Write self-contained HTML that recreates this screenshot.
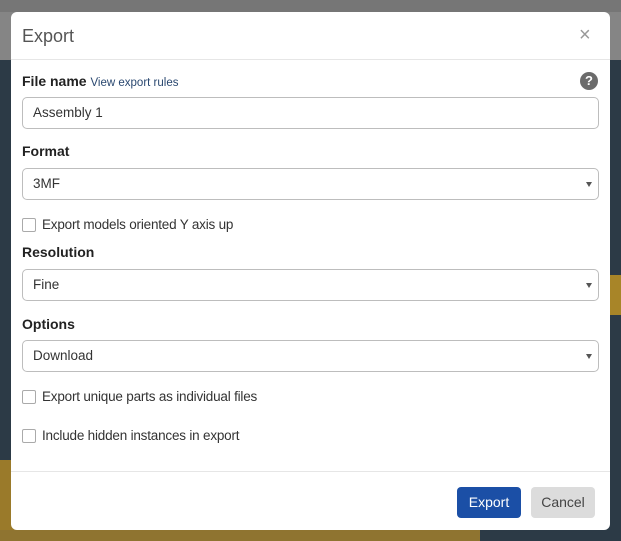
<!DOCTYPE html>
<html><head><style>
body{margin:0;width:621px;height:541px;position:relative;overflow:hidden;font-family:"Liberation Sans",sans-serif;background:#2c3a46}
.a{position:absolute}
.lbl{position:absolute;left:22px;font-weight:bold;font-size:14px;color:#222}
.inp{position:absolute;left:22px;width:577px;height:32px;border:1px solid #bdbdbd;border-radius:5px;box-sizing:border-box;font-size:13.5px;color:#333;padding-left:10px;line-height:30px}
.arr{position:absolute;right:6px;top:13px;width:0;height:0;border-left:3.5px solid transparent;border-right:3.5px solid transparent;border-top:5px solid #555}
.cb{position:absolute;left:22px;width:12px;height:12px;border:1px solid #aaa;border-radius:2px}
.ct{position:absolute;left:42px;font-size:13.5px;color:#333;letter-spacing:-0.2px}
</style></head><body>
<div class="a" style="left:0;top:0;width:621px;height:60px;background:#858585"></div>
<div class="a" style="left:0;top:0;width:621px;height:12px;background:#767676"></div>
<div class="a" style="left:0;top:460px;width:30px;height:81px;background:#9a7a2a"></div>
<div class="a" style="left:0;top:530px;width:480px;height:11px;background:#8f7430"></div>
<div class="a" style="left:610px;top:275px;width:11px;height:40px;background:#a88528"></div>
<div class="a" style="left:11px;top:12px;width:599px;height:518px;background:#fff;border-radius:6px"></div>
<div class="a" style="left:22px;top:26px;font-size:18px;color:#555">Export</div>
<div class="a" style="left:579px;top:24px;font-size:20px;color:#999;font-weight:300">×</div>
<div class="a" style="left:11px;top:59px;width:599px;height:1px;background:#e6e6e6"></div>
<div class="lbl" style="top:73px">File name <span style="font-weight:normal;font-size:11.5px;color:#2a4870">View export rules</span></div>
<div class="a" style="left:580px;top:72px;width:18px;height:18px;border-radius:50%;background:#6b6b6b;color:#fff;font-weight:bold;font-size:13px;text-align:center;line-height:18px">?</div>
<div class="inp" style="top:97px">Assembly 1</div>
<div class="lbl" style="top:143px">Format</div>
<div class="inp" style="top:168px">3MF<div class="arr"></div></div>
<div class="cb" style="top:218px"></div><div class="ct" style="top:217px">Export models oriented Y axis up</div>
<div class="lbl" style="top:244px">Resolution</div>
<div class="inp" style="top:269px">Fine<div class="arr"></div></div>
<div class="lbl" style="top:316px">Options</div>
<div class="inp" style="top:340px">Download<div class="arr"></div></div>
<div class="cb" style="top:390px"></div><div class="ct" style="top:389px">Export unique parts as individual files</div>
<div class="cb" style="top:429px"></div><div class="ct" style="top:428px">Include hidden instances in export</div>
<div class="a" style="left:11px;top:471px;width:599px;height:1px;background:#e6e6e6"></div>
<div class="a" style="left:457px;top:487px;width:64px;height:31px;background:#1b4fa6;border-radius:4px;color:#fff;font-size:14px;text-align:center;line-height:31px">Export</div>
<div class="a" style="left:531px;top:487px;width:64px;height:31px;background:#dcdcdc;border-radius:4px;color:#444;font-size:14px;text-align:center;line-height:31px">Cancel</div>
</body></html>
